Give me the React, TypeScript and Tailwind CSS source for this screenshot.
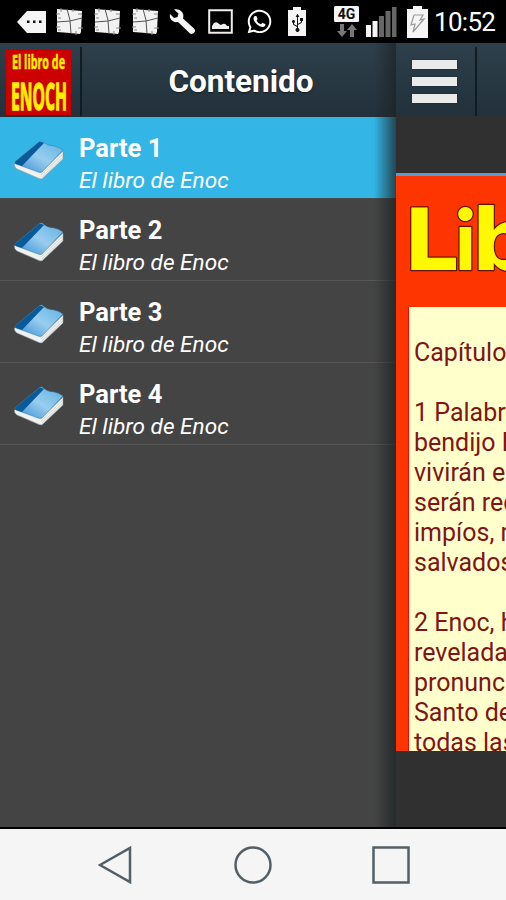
import React from "react";
import { FaWhatsapp, FaUsb } from "react-icons/fa";

const parts = [
  { id: 1, title: "Parte 1", subtitle: "El libro de Enoc" },
  { id: 2, title: "Parte 2", subtitle: "El libro de Enoc" },
  { id: 3, title: "Parte 3", subtitle: "El libro de Enoc" },
  { id: 4, title: "Parte 4", subtitle: "El libro de Enoc" },
];

const verses = [
  "Capítulo 1",
  "",
  "1 Palabras de",
  "bendijo Enoc",
  "vivirán en el",
  "serán rechaz",
  "impíos, mient",
  "salvados.",
  "",
  "2 Enoc, homb",
  "reveladas",
  "pronunció",
  "Santo de los",
  "todas las",
];

function PackageIcon() {
  return (
    <svg width="27" height="27" viewBox="0 0 27 27" className="shrink-0">
      <path d="M1 1L13 2L26 3L25 24L24 26L14 25L1 24Z" fill="#f2f2f2" />
      <path
        d="M11 1L14 12L15 26M1 14L14 13L26 10"
        fill="none"
        stroke="#555"
        strokeWidth="1"
      />
      <path
        d="M0 6h4M0 19h4M22 6h4M22 20h5M5 0v4M20 23v4M2 10h3M2 22h3M17 1v3"
        fill="none"
        stroke="#888"
        strokeWidth="1"
      />
    </svg>
  );
}

function StatusBar() {
  return (
    <header className="flex h-[43px] shrink-0 items-center bg-black pl-[17px] text-white">
      <svg width="29" height="24" viewBox="0 0 29 24" className="shrink-0">
        <path d="M0 12L10 1H29V23H10Z" fill="#f5f5f5" />
        <path d="M10 10.500h2.500v2.500h-2.500zM16 10.500h2.500v2.500h-2.500zM22 10.500h2.500v2.500h-2.500z" fill="#111" />
      </svg>
      <div className="ml-[10px] flex gap-[11px]">
        <PackageIcon />
        <PackageIcon />
        <PackageIcon />
      </div>
      <svg width="27" height="27" viewBox="0 0 27 27" className="ml-[10px] shrink-0">
        <path
          d="M5 1.500L9.500 5.500L8.500 9L5 10L1 6C0 10 3 15 9 14L21 25.500Q24 27 26 23.500Q26.500 22 25 20.500L14 10.500C16 5 11 0 5 1.500Z"
          fill="#f5f5f5"
        />
      </svg>
      <svg width="25" height="25" viewBox="0 0 25 25" className="ml-[12px] shrink-0">
        <path d="M1.200 1.200H23.800V23.800H1.200Z" fill="none" stroke="#eee" strokeWidth="2" />
        <path d="M4 20V17L6 14Q9 12 11 15L13 16Q17 13 19 17H21V20Z" fill="#eee" />
      </svg>
      <FaWhatsapp size={27} className="ml-[13px] shrink-0" />
      <svg width="20" height="30" viewBox="0 0 20 30" className="ml-[14px] shrink-0">
        <path d="M6 0H14V3H19V29H1V3H6Z" fill="#f5f5f5" />
        <g transform="translate(1.500 25) rotate(-90)">
          <FaUsb size={18} color="#111" />
        </g>
      </svg>
      <svg width="27" height="33" viewBox="0 0 27 33" className="ml-[26px] shrink-0">
        <rect x="1" y="1" width="25" height="16" rx="1.500" fill="#f5f5f5" />
        <text x="13.500" y="14" textAnchor="middle" fontSize="14" fontWeight="700" fontFamily="Roboto, sans-serif" fill="#111">
          4G
        </text>
        <path d="M7 19h4v7h3l-5 6l-5-6h3zM17 32h4v-7h3l-5-6l-5 6h3z" fill="#777" />
      </svg>
      <svg width="31" height="31" viewBox="0 0 31 31" className="ml-[6px] shrink-0">
        <path d="M0 19h5v12H0zM6.500 15h5v16h-5z" fill="#f5f5f5" />
        <path d="M13 10h5v21h-5zM19.500 5h5v26h-5zM26 1h4.500v30H26z" fill="#666" />
      </svg>
      <svg width="21" height="32" viewBox="0 0 21 32" className="ml-[10px] shrink-0">
        <path d="M6 0H15V3H21V32H0V3H6Z" fill="#f5f5f5" />
        <path d="M7 9H16L13 14L17 13L6 26L8 18L4 19Z" fill="#f5f5f5" stroke="#999" strokeWidth="1.200" />
      </svg>
      <span className="ml-[6px] text-[26px] leading-none tracking-[-0.700px]">10:52</span>
    </header>
  );
}

function AppLogo() {
  return (
    <svg width="65" height="65" viewBox="0 0 65 65" className="ml-[6px] mt-[7px] shrink-0">
      <rect width="65" height="65" fill="#cd0000" />
      <g fill="#fff000" stroke="#fff000" fontFamily="'Open Sans', sans-serif" fontWeight="700">
        <text x="6" y="18.500" fontSize="19" strokeWidth="0.400" textLength="53" lengthAdjust="spacingAndGlyphs">
          El libro de
        </text>
        <text x="5" y="60" fontSize="37" strokeWidth="1.300" textLength="56" lengthAdjust="spacingAndGlyphs">
          ENOCH
        </text>
      </g>
    </svg>
  );
}

function BookIcon({ id }: { id: number }) {
  return (
    <svg width="52" height="42" viewBox="0 0 52 42" className="ml-[13px] mt-[22px] shrink-0">
      <defs>
        <linearGradient id={`cover-${id}`} x1="0" y1="1" x2="1" y2="0">
          <stop offset="0" stopColor="#3488ce" />
          <stop offset="0.500" stopColor="#98cdf0" />
          <stop offset="1" stopColor="#5fb0e2" />
        </linearGradient>
      </defs>
      <path d="M3 24L28 33L50 12V20L31 38Q29 41 26 39.500L4 30Q1 28 1.500 25Z" fill="#f1f1ee" stroke="#8999a4" strokeWidth="0.600" />
      <path d="M28 36L50 15M29 38L50 18" stroke="#c6c9c9" strokeWidth="0.700" />
      <path d="M26 3Q27 2 29 2Q34 7 41 7Q46 8 50 11L29 33Q27 34 25 33L3 25Q1 24 3 22Z" fill={`url(#cover-${id})`} stroke="#327cab" strokeWidth="0.500" />
      <path d="M26 3Q27 2 31 4L9 27L3 25Q1 24 3 22Z" fill="#0a5a9a" />
    </svg>
  );
}

function Drawer() {
  return (
    <aside className="relative flex w-[396px] shrink-0 flex-col bg-[#444]">
      <div className="flex h-[74px] shrink-0 border-b border-[#253039] bg-linear-to-b from-[#2e404c] to-[#22313b]">
        <AppLogo />
        <div className="ml-[9px] mt-[4px] w-[2px] bg-[#101c24]" />
        <h1 className="flex flex-1 items-center justify-center pt-[5px] text-[31.500px] font-bold text-white text-shadow-[0_1px_2px_#0008]">
          <span className="pl-[4px]">Contenido</span>
        </h1>
      </div>
      <ul>
        {parts.map((part) => (
          <li
            key={part.id}
            className={
              part.id === 1
                ? "flex h-[82px] border-b border-[#4b4b4b] bg-[#33b5e5] text-white"
                : "flex h-[82px] border-b border-[#575757] text-white"
            }
          >
            <BookIcon id={part.id} />
            <div className="pl-[14px] pt-[15px]">
              <h2 className="text-[25.500px] leading-[32px] font-bold">{part.title}</h2>
              <p className="text-[22.600px] leading-[34px] italic">{part.subtitle}</p>
            </div>
          </li>
        ))}
      </ul>
      {/* shadow under the sliding page */}
      <div className="absolute inset-y-0 right-0 w-[22px] bg-linear-to-r from-transparent to-[#1d2224]/75" />
    </aside>
  );
}

function BookTitle() {
  return (
    <svg width="110" height="131" viewBox="0 0 110 131" className="shrink-0">
      <g
        fontWeight="700"
        fontSize="86"
        fill="#fff900"
        stroke="#651000"
        strokeWidth="2.500"
        strokeLinejoin="round"
        paintOrder="stroke"
      >
        <text x="7.500" y="94" fontFamily="'DejaVu Sans', sans-serif">
          L
        </text>
        <text x="58.500" y="94" fontSize="84" fontFamily="Lato, sans-serif" fontWeight="900">
          i
        </text>
        <text x="75.500" y="94" fontFamily="'DejaVu Sans', sans-serif">
          b
        </text>
      </g>
    </svg>
  );
}

function Page() {
  return (
    <main className="flex w-[110px] shrink-0 flex-col overflow-hidden bg-[#303030]">
      <div className="flex h-[73px] shrink-0 bg-linear-to-b from-[#2e404c] to-[#22313b]">
        <button className="flex w-[79px] flex-col gap-[8px] pt-[17px] pl-[16px]" aria-label="Menu">
          <span className="h-[9px] w-[45px] bg-[#eaeaea] shadow-[0_0_2px_#0a2b40]" />
          <span className="h-[9px] w-[45px] bg-[#eaeaea] shadow-[0_0_2px_#0a2b40]" />
          <span className="h-[9px] w-[45px] bg-[#eaeaea] shadow-[0_0_2px_#0a2b40]" />
        </button>
        <div className="mt-[4px] w-[2px] bg-[#101c24]" />
      </div>
      <div className="mt-[57px] flex h-[578px] flex-col overflow-hidden border-t-[3px] border-[#5d9bca] bg-[#ff3500]">
        <BookTitle />
        <article className="ml-[12px] w-[300px] shrink-0 border-l border-[#ff0000] bg-[#ffffcc] pt-[31px] pl-[5px] text-[25px] leading-[30px] whitespace-nowrap text-[#801515]">
          {verses.map((line, i) => (
            <p key={i} className="h-[30px]">
              {line}
            </p>
          ))}
        </article>
      </div>
    </main>
  );
}

function NavBar() {
  return (
    <nav className="flex h-[73px] shrink-0 items-center border-t-2 border-black bg-[#f5f5f5] pl-[98px]">
      <svg width="34" height="40" viewBox="0 0 34 40">
        <path d="M2 20L32 3V37Z" fill="none" stroke="#535f66" strokeWidth="2.500" />
      </svg>
      <svg width="40" height="40" viewBox="0 0 40 40" className="ml-[101px]">
        <circle cx="20" cy="20" r="17.500" fill="none" stroke="#535f66" strokeWidth="2.500" />
      </svg>
      <svg width="40" height="40" viewBox="0 0 40 40" className="ml-[98px]">
        <rect x="2.500" y="2.500" width="35" height="35" fill="none" stroke="#535f66" strokeWidth="2.500" />
      </svg>
    </nav>
  );
}

export default function App() {
  return (
    <div className="flex h-[900px] w-[506px] flex-col overflow-hidden bg-[#303030] font-[Roboto,sans-serif]">
      <StatusBar />
      <div className="flex h-[784px] shrink-0">
        <Drawer />
        <Page />
      </div>
      <NavBar />
    </div>
  );
}
